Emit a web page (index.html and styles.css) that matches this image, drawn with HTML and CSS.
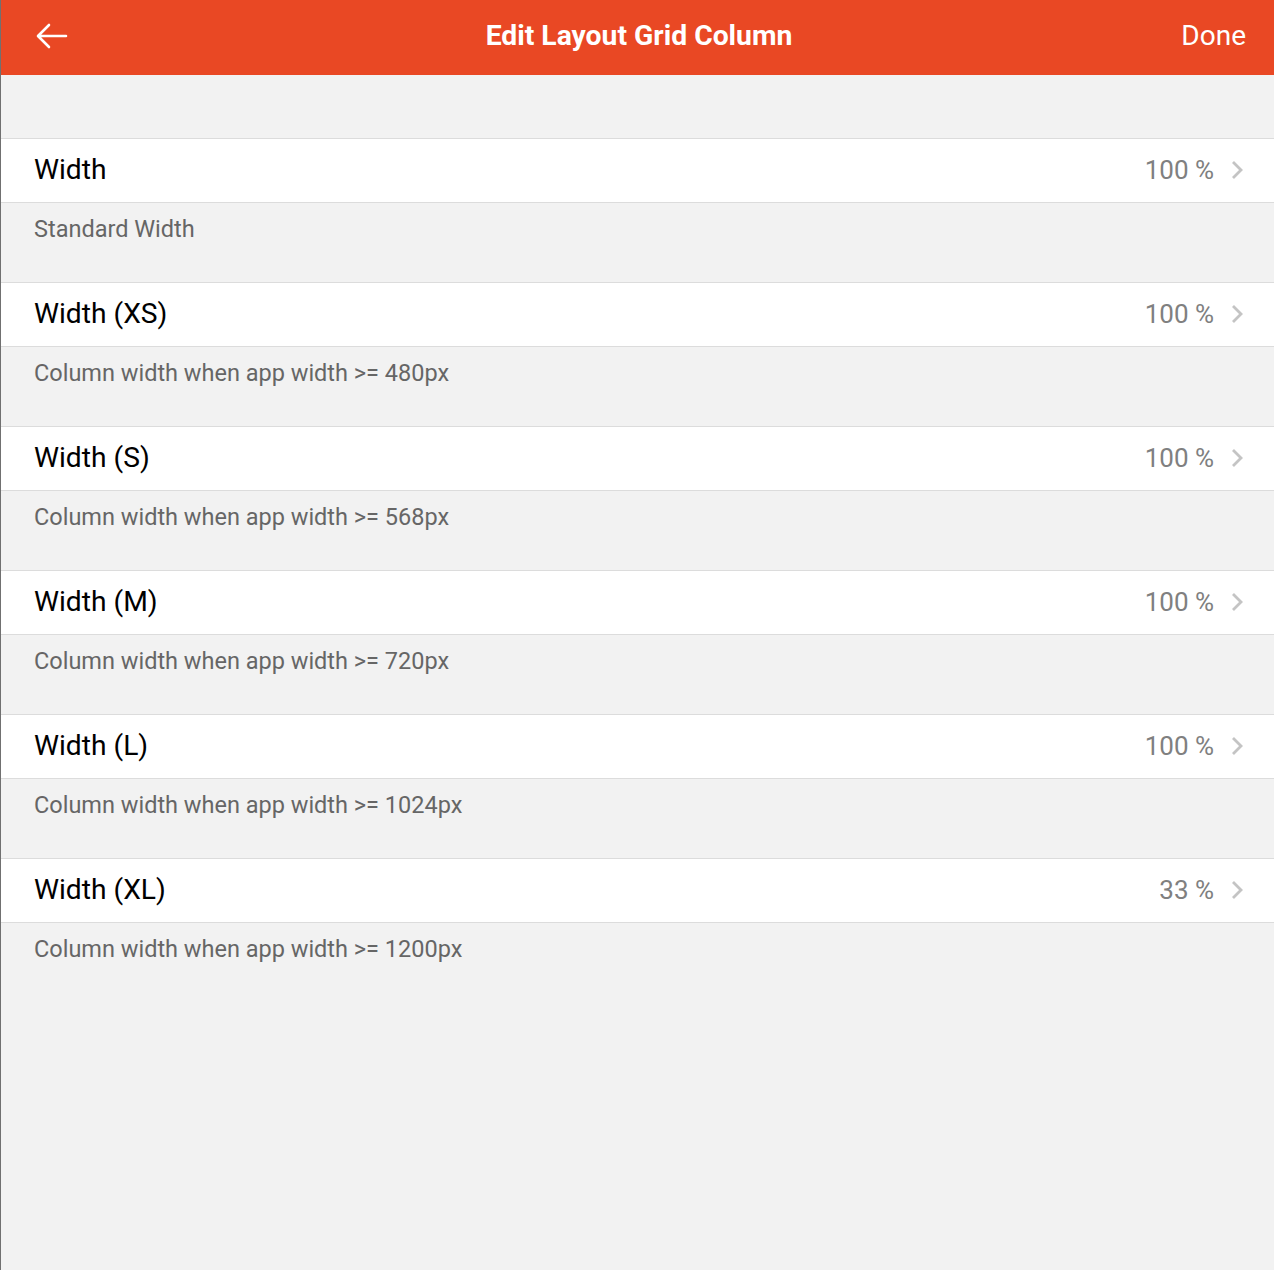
FILE: index.html
```html
<!DOCTYPE html>
<html>
<head>
<meta charset="utf-8">
<link rel="stylesheet" href="styles.css">
</head>
<body>
<div class="app">
  <header class="bar">
    <button class="back" aria-label="Back">
      <svg width="32" height="26" viewBox="0 0 32 26"><path d="M30 13H3M13 2L2 13l11 11" fill="none" stroke="#fff" stroke-width="2.6" stroke-linecap="round" stroke-linejoin="round"/></svg>
    </button>
    <h1 class="title">Edit Layout Grid Column</h1>
    <span class="done">Done</span>
  </header>
  <div class="spacer"></div>
  <section class="group">
    <div class="row"><span class="label">Width</span><span class="value">100 %</span><svg class="chev" width="12" height="20" viewBox="0 0 12 20"><path d="M2 2l8 8-8 8" fill="none" stroke="#c4c4c4" stroke-width="2.8"/></svg></div>
    <div class="desc">Standard Width</div>
  </section>
  <section class="group">
    <div class="row"><span class="label">Width (XS)</span><span class="value">100 %</span><svg class="chev" width="12" height="20" viewBox="0 0 12 20"><path d="M2 2l8 8-8 8" fill="none" stroke="#c4c4c4" stroke-width="2.8"/></svg></div>
    <div class="desc">Column width when app width &gt;= 480px</div>
  </section>
  <section class="group">
    <div class="row"><span class="label">Width (S)</span><span class="value">100 %</span><svg class="chev" width="12" height="20" viewBox="0 0 12 20"><path d="M2 2l8 8-8 8" fill="none" stroke="#c4c4c4" stroke-width="2.8"/></svg></div>
    <div class="desc">Column width when app width &gt;= 568px</div>
  </section>
  <section class="group">
    <div class="row"><span class="label">Width (M)</span><span class="value">100 %</span><svg class="chev" width="12" height="20" viewBox="0 0 12 20"><path d="M2 2l8 8-8 8" fill="none" stroke="#c4c4c4" stroke-width="2.8"/></svg></div>
    <div class="desc">Column width when app width &gt;= 720px</div>
  </section>
  <section class="group">
    <div class="row"><span class="label">Width (L)</span><span class="value">100 %</span><svg class="chev" width="12" height="20" viewBox="0 0 12 20"><path d="M2 2l8 8-8 8" fill="none" stroke="#c4c4c4" stroke-width="2.8"/></svg></div>
    <div class="desc">Column width when app width &gt;= 1024px</div>
  </section>
  <section class="group">
    <div class="row"><span class="label">Width (XL)</span><span class="value">33 %</span><svg class="chev" width="12" height="20" viewBox="0 0 12 20"><path d="M2 2l8 8-8 8" fill="none" stroke="#c4c4c4" stroke-width="2.8"/></svg></div>
    <div class="desc">Column width when app width &gt;= 1200px</div>
  </section>
</div>
</body>
</html>
```
FILE: styles.css
```css
* { box-sizing: border-box; }
html, body { margin: 0; padding: 0; }
body {
  font-family: Roboto, "Liberation Sans", sans-serif;
  background: #f2f2f2;
}
.app {
  min-height: 1270px;
  background: #f2f2f2;
  border-left: 1px solid #707070;
}
.bar {
  height: 75px;
  background: #e94824;
  display: grid;
  grid-template-columns: 1fr auto 1fr;
  align-items: center;
  padding: 0 28px 4px 35px;
}
.back {
  background: none;
  border: 0;
  padding: 0;
  width: 32px;
  height: 26px;
  display: flex;
  cursor: pointer;
  justify-self: start;
}
.title {
  margin: 0 4px 0 0;
  text-align: center;
  color: #fff;
  font-size: 28.3px;
  font-weight: 700;
}
.done {
  justify-self: end;
  color: #fff;
  font-size: 28px;
}
.spacer { height: 63px; }
.row {
  height: 65px;
  background: #fff;
  border-top: 1px solid #dcdcdc;
  border-bottom: 1px solid #dcdcdc;
  display: flex;
  align-items: center;
  padding: 0 31px 2px 33px;
}
.label {
  flex: 1;
  font-size: 28.2px;
  color: #000;
}
.value {
  font-size: 26px;
  color: #808080;
}
.chev {
  margin-left: 17px;
  display: block;
}
.desc {
  height: 79px;
  padding: 11px 0 0 33px;
  font-size: 23.5px;
  line-height: 30px;
  color: #666;
}
```
